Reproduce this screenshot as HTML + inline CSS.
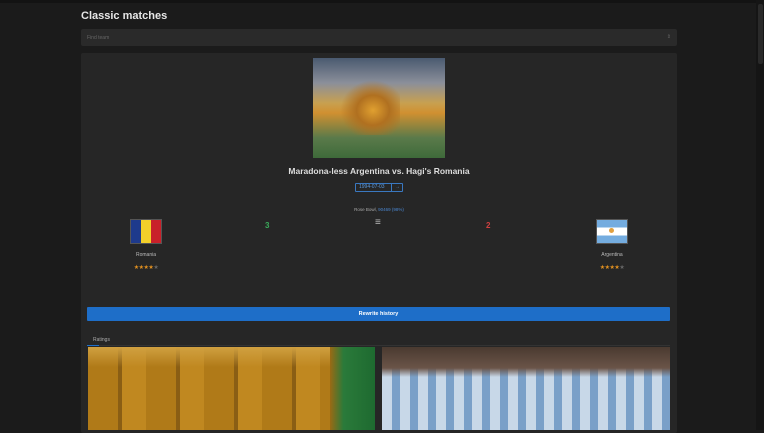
<!DOCTYPE html>
<html><head><style>
*{margin:0;padding:0;box-sizing:border-box}
body{width:764px;height:430px;overflow:hidden;background:#1b1b1b;font-family:"Liberation Sans",sans-serif;color:#ddd;position:relative}
.abs{position:absolute}
</style></head><body>
<div class="abs" style="left:0;top:0;width:764px;height:3px;background:#131313"></div>
<div class="abs" style="left:756px;top:0;width:8px;height:430px;background:#151515"></div>
<div class="abs" style="left:758px;top:4px;width:5px;height:60px;background:#2a2a2a;border-radius:2px"></div>
<div class="abs" style="left:81px;top:10px;font-size:11px;font-weight:bold;color:#e6e6e6">Classic matches</div>
<div class="abs" style="left:81px;top:29px;width:596px;height:17px;background:#2a2a2a;border-radius:2px;font-size:5px;color:#666;padding:6px 6px"><span>Find team</span><span style="position:absolute;right:6px;top:5px">⇕</span></div>
<div class="abs" style="left:81px;top:53px;width:596px;height:380px;background:#262626;border-radius:2px"></div>
<div class="abs" style="left:313px;top:58px;width:132px;height:100px;background:linear-gradient(180deg,#4a5a70 0%,#8b8f9a 25%,#c8a050 45%,#d09030 55%,#5a7a4a 80%,#3e6a3a 100%)"></div>
<div class="abs" style="left:340px;top:80px;width:60px;height:55px;background:radial-gradient(ellipse at 55% 55%,#e0a030 0%,#b07020 35%,transparent 70%)"></div>
<div class="abs" style="left:81px;top:166px;width:596px;text-align:center;font-size:8.5px;font-weight:bold;color:#ddd">Maradona-less Argentina vs. Hagi's Romania</div>
<div class="abs" style="left:355px;top:183px;width:48px;height:9px;border:1px solid #3a78c0;border-radius:1px;font-size:5px;color:#5a9ae0;line-height:7px"><span style="padding-left:3px">1994-07-03</span><span style="position:absolute;left:35px;top:0;width:1px;height:7px;background:#3a78c0"></span><span style="position:absolute;left:39px">→</span></div>
<div class="abs" style="left:81px;top:207px;width:596px;text-align:center;font-size:4.5px;color:#aaa">Rose Bowl, <span style="color:#4a86d0">90469 (98%)</span></div>
<div class="abs" style="left:130px;top:219px;width:32px;height:25px;display:flex;border:1px solid #555"><div style="flex:1;background:#1e3a8c"></div><div style="flex:1;background:#f2cf2a"></div><div style="flex:1;background:#c8202a"></div></div>
<div class="abs" style="left:115px;top:252px;width:62px;text-align:center;font-size:5px;color:#bbb">Romania</div>
<div class="abs" style="left:115px;top:264px;width:62px;text-align:center;font-size:6px;color:#e09020;letter-spacing:-0.5px">★★★★<span style="color:#666">★</span></div>
<div class="abs" style="left:265px;top:221px;font-size:8px;font-weight:bold;color:#3aaa5a">3</div>
<div class="abs" style="left:375px;top:217px;font-size:10px;color:#bbb">≡</div>
<div class="abs" style="left:486px;top:221px;font-size:8px;font-weight:bold;color:#d04040">2</div>
<div class="abs" style="left:596px;top:219px;width:32px;height:25px;border:1px solid #555;background:linear-gradient(#74acdf 0 33%,#fff 33% 67%,#74acdf 67%)"><div style="position:absolute;left:12px;top:8px;width:5px;height:5px;border-radius:50%;background:#e0a040"></div></div>
<div class="abs" style="left:581px;top:252px;width:62px;text-align:center;font-size:5px;color:#bbb">Argentina</div>
<div class="abs" style="left:581px;top:264px;width:62px;text-align:center;font-size:6px;color:#e09020;letter-spacing:-0.5px">★★★★<span style="color:#666">★</span></div>
<div class="abs" style="left:87px;top:307px;width:583px;height:14px;background:#1e6ec8;border-radius:1px;font-size:5.5px;color:#fff;text-align:center;line-height:14px;font-weight:bold">Rewrite history</div>
<div class="abs" style="left:93px;top:337px;font-size:5px;color:#aaa">Ratings</div>
<div class="abs" style="left:87px;top:345px;width:583px;height:1px;background:#333"></div>
<div class="abs" style="left:87px;top:345px;width:12px;height:1px;background:#1e6ec8"></div>
<div class="abs" style="left:88px;top:347px;width:287px;height:83px;background:repeating-linear-gradient(90deg,#b07a18 0 30px,#8a5e14 30px 34px,#c08820 34px 58px)"></div>
<div class="abs" style="left:88px;top:347px;width:287px;height:20px;background:linear-gradient(180deg,#d0a040,transparent)"></div>
<div class="abs" style="left:330px;top:347px;width:45px;height:83px;background:linear-gradient(90deg,#9a6a14,#2a7a3a 30%,#1e6a30)"></div>
<div class="abs" style="left:382px;top:347px;width:288px;height:83px;background:repeating-linear-gradient(90deg,#c8d8e8 0 10px,#7aa0c8 10px 18px)"></div>
<div class="abs" style="left:382px;top:347px;width:288px;height:30px;background:linear-gradient(180deg,#4a3a30,#6a5448 70%,transparent)"></div>
</body></html>
